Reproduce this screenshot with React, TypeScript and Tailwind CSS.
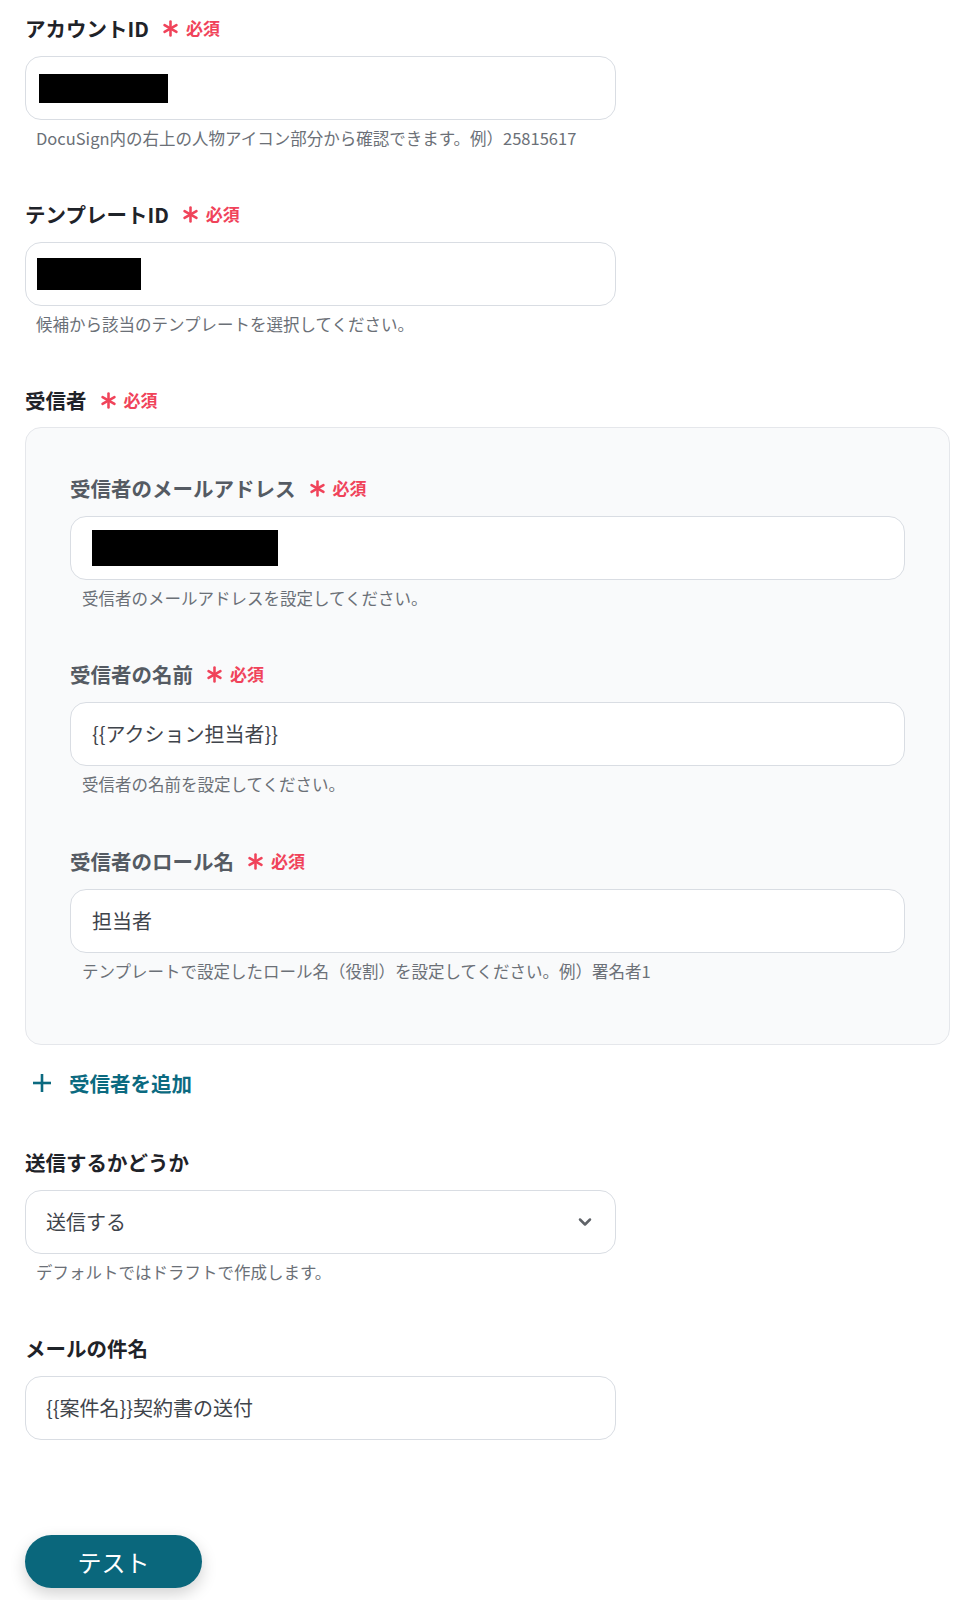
import React from 'react';
import { ChevronDown } from 'lucide-react';

const font = { fontFamily: '"Noto Sans CJK JP", "Noto Sans", sans-serif' };

function Asterisk() {
    return (
        <svg width="17" height="17" viewBox="0 0 16 16" className="shrink-0">
            <g stroke="#f0435a" strokeWidth="2.4" strokeLinecap="round">
                <line x1="8" y1="1.5" x2="8" y2="14.5" />
                <line x1="2.4" y1="4.8" x2="13.6" y2="11.2" />
                <line x1="2.4" y1="11.2" x2="13.6" y2="4.8" />
            </g>
        </svg>
    );
}

function Label({ text, required, inner }: { text: string; required?: boolean; inner?: boolean }) {
    return (
        <div className="flex items-center h-7 overflow-visible">
            <span className={`text-[20.5px] font-bold leading-7 ${inner ? 'text-[#555b63]' : 'text-[#1f2329]'}`}>{text}</span>
            {required && (
                <span className="flex items-center ml-[13px] gap-[7px]">
                    <Asterisk />
                    <span className="text-[17px] font-bold text-[#f0435a] leading-6">必須</span>
                </span>
            )}
        </div>
    );
}

function Hint({ text, inner }: { text: string; inner?: boolean }) {
    return (
        <div
            className={`mt-[6px] h-6 text-[16.5px] leading-6 text-[#6b7077] whitespace-nowrap ${
                inner ? 'pl-3' : 'pl-[11px]'
            }`}
        >
            {text}
        </div>
    );
}

function Field({
    label,
    required,
    hint,
    value,
    redact,
    select,
    inner,
    className = '',
}: {
    label: string;
    required?: boolean;
    hint?: string;
    value?: string;
    redact?: { w: number; h: number; pl: number };
    select?: boolean;
    inner?: boolean;
    className?: string;
}) {
    return (
        <div className={className}>
            <Label text={label} required={required} inner={inner} />
            <div
                className={`mt-[14px] h-[64px] rounded-[16px] border border-[#d9dde3] bg-white flex items-center ${
                    inner ? 'w-full' : 'w-[591px]'
                }`}
            >
                {redact ? (
                    <div className="bg-black" style={{ width: redact.w, height: redact.h, marginLeft: redact.pl }} />
                ) : (
                    <div className={`flex-1 flex items-center justify-between pr-5 ${inner ? 'pl-[21px]' : 'pl-5'}`}>
                        <span className="text-[20px] text-[#3f444b] leading-7">{value}</span>
                        {select && <ChevronDown size={20} strokeWidth={3} className="text-[#5f6368]" />}
                    </div>
                )}
            </div>
            {hint && <Hint text={hint} inner={inner} />}
        </div>
    );
}

export default function App() {
    return (
        <div className="bg-white min-h-[1600px] pl-[25px] pt-[14px]" style={font}>
            <Field
                label="アカウントID"
                required
                redact={{ w: 129, h: 29, pl: 13 }}
                hint="DocuSign内の右上の人物アイコン部分から確認できます。例）25815617"
            />
            <Field
                className="mt-[50px]"
                label="テンプレートID"
                required
                redact={{ w: 104, h: 32, pl: 11 }}
                hint="候補から該当のテンプレートを選択してください。"
            />

            <div className="mt-[50px]">
                <Label text="受信者" required />
                <div className="mt-[13px] w-[925px] rounded-[16px] border border-[#e5e7eb] bg-[#f9fafb] px-[44px] pt-[46px] pb-[61px]">
                    <Field
                        inner
                        label="受信者のメールアドレス"
                        required
                        redact={{ w: 186, h: 36, pl: 21 }}
                        hint="受信者のメールアドレスを設定してください。"
                    />
                    <Field
                        inner
                        className="mt-[50px]"
                        label="受信者の名前"
                        required
                        value="{{アクション担当者}}"
                        hint="受信者の名前を設定してください。"
                    />
                    <Field
                        inner
                        className="mt-[51px]"
                        label="受信者のロール名"
                        required
                        value="担当者"
                        hint="テンプレートで設定したロール名（役割）を設定してください。例）署名者1"
                    />
                </div>
            </div>

            <button className="mt-[24px] flex items-center h-7 pl-[7px] text-[#0b6a80]">
                <svg width="20" height="20" viewBox="0 0 20 20">
                    <g stroke="#0b6a80" strokeWidth="2.6">
                        <line x1="10" y1="1" x2="10" y2="19" />
                        <line x1="1" y1="10" x2="19" y2="10" />
                    </g>
                </svg>
                <span className="ml-[17px] text-[20.5px] font-bold leading-7">受信者を追加</span>
            </button>

            <Field
                className="mt-[51px]"
                label="送信するかどうか"
                value="送信する"
                select
                hint="デフォルトではドラフトで作成します。"
            />
            <Field className="mt-[50px]" label="メールの件名" value="{{案件名}}契約書の送付" />

            <button className="block mt-[95px] w-[177px] h-[53px] rounded-full bg-[#0a677c] text-white text-[24px] leading-8 shadow-[0_6px_16px_rgba(0,0,0,0.18)]">
                テスト
            </button>
        </div>
    );
}
